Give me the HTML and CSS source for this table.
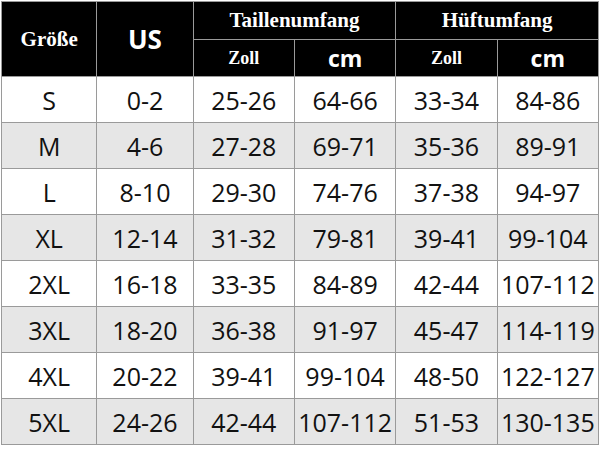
FILE: index.html
```html
<!DOCTYPE html>
<html lang="de">
<head>
    <meta charset="UTF-8">
    <meta name="viewport" content="width=device-width, initial-scale=1.0">
    <title>Größentabelle</title>
    <link rel="stylesheet" href="styles.css">
</head>
<body>

<!-- Size chart -->
<table class="size-table">
    <colgroup>
        <col class="col-a">
        <col class="col-b">
        <col class="col-c">
        <col class="col-c">
        <col class="col-c">
        <col class="col-c">
    </colgroup>
    <thead>
        <tr class="head-top">
            <th rowspan="2" class="serif">Größe</th>
            <th rowspan="2" class="sans big">US</th>
            <th colspan="2" class="serif">Taillenumfang</th>
            <th colspan="2" class="serif">Hüftumfang</th>
        </tr>
        <tr class="head-sub">
            <th class="serif small">Zoll</th>
            <th class="sans">cm</th>
            <th class="serif small">Zoll</th>
            <th class="sans">cm</th>
        </tr>
    </thead>
    <tbody>
        <tr><td>S</td><td>0-2</td><td>25-26</td><td>64-66</td><td>33-34</td><td>84-86</td></tr>
        <tr><td>M</td><td>4-6</td><td>27-28</td><td>69-71</td><td>35-36</td><td>89-91</td></tr>
        <tr><td>L</td><td>8-10</td><td>29-30</td><td>74-76</td><td>37-38</td><td>94-97</td></tr>
        <tr><td>XL</td><td>12-14</td><td>31-32</td><td>79-81</td><td>39-41</td><td>99-104</td></tr>
        <tr><td>2XL</td><td>16-18</td><td>33-35</td><td>84-89</td><td>42-44</td><td>107-112</td></tr>
        <tr><td>3XL</td><td>18-20</td><td>36-38</td><td>91-97</td><td>45-47</td><td>114-119</td></tr>
        <tr><td>4XL</td><td>20-22</td><td>39-41</td><td>99-104</td><td>48-50</td><td>122-127</td></tr>
        <tr><td>5XL</td><td>24-26</td><td>42-44</td><td>107-112</td><td>51-53</td><td>130-135</td></tr>
    </tbody>
</table>

</body>
</html>
```

FILE: styles.css
```css
body {
    margin: 0;
    padding: 1px 0 0 1px;
    background-color: white;
}

.size-table {
    border-collapse: collapse;
    table-layout: fixed;
    width: 598px;
    border: 1px solid #9a9a9a;
}

.col-a {
    width: 95px;
}

.col-b {
    width: 96px;
}

.col-c {
    width: 101px;
}

.size-table th,
.size-table td {
    border: 1px solid #9a9a9a;
    padding: 0;
    text-align: center;
    overflow: hidden;
    white-space: nowrap;
}

.size-table th {
    background-color: #000;
    color: white;
}

.head-top th {
    height: 37px;
}

.head-sub th {
    height: 36px;
}

.serif {
    font-family: "Liberation Serif", "Times New Roman", serif;
    font-size: 21px;
    font-weight: bold;
}

.serif.small {
    font-size: 18px;
}

.sans {
    font-family: "Open Sans", "Noto Sans", sans-serif;
    font-size: 23px;
    font-weight: bold;
}

.sans.big {
    font-size: 26px;
}

.size-table td {
    height: 45px;
    font-family: "Open Sans", "Noto Sans", sans-serif;
    font-size: 25px;
    color: #111;
}

.size-table tbody tr:nth-child(even) td {
    background-color: #e6e6e6;
}
```
